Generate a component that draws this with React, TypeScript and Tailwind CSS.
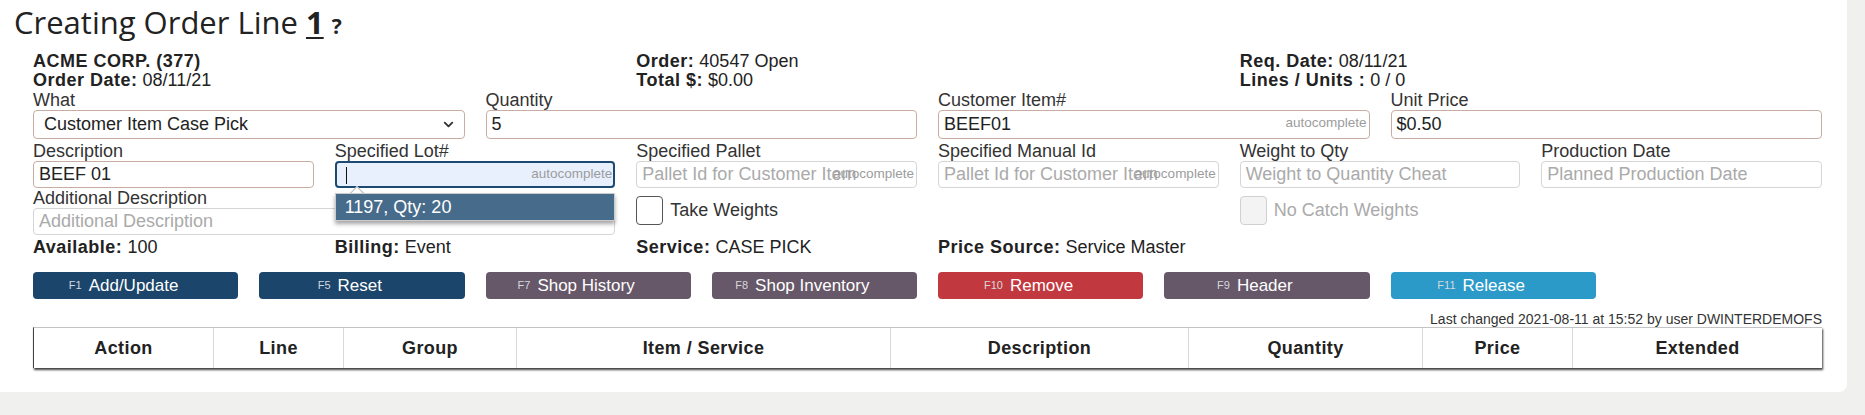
import { ChevronDown } from 'lucide-react';

type Tone = 'warm' | 'plain';

interface BoxProps {
  value?: string;
  placeholder?: string;
  hint?: boolean;
  tone?: Tone;
  tall?: boolean;
}

const Label = ({ children }: { children: React.ReactNode }) => (
  <div className="text-[18px] leading-[20px] text-[#333] whitespace-nowrap">{children}</div>
);

// bold captions in the reference are a touch wider than Arial bold
const B = ({ children }: { children: React.ReactNode }) => (
  <b className="font-bold tracking-[0.5px]">{children}</b>
);

const TextBox = ({ value, placeholder, hint, tone = 'plain', tall }: BoxProps) => (
  <div
    className={`relative ${tall ? 'h-[29px]' : 'h-[27px]'} rounded-[4px] border bg-white overflow-hidden ${
      tone === 'warm' ? 'border-[#c9ada2]' : 'border-[#d5d5d5]'
    }`}
  >
    <div className="absolute inset-y-0 left-[5px] flex items-center text-[18px] whitespace-nowrap">
      {value ? <span className="text-[#222]">{value}</span> : <span className="text-[#aaa]">{placeholder}</span>}
    </div>
    {hint && (
      <span className="absolute right-[2px] top-[4px] text-[13.5px] leading-[16px] text-[#9c9c9c]">autocomplete</span>
    )}
  </div>
);

const Check = ({ label, disabled }: { label: string; disabled?: boolean }) => (
  <div className="flex items-center gap-[7px]">
    <div
      className={`w-[27px] h-[29px] rounded-[4px] border ${
        disabled ? 'bg-[#f3f3f3] border-[#d0d0d0]' : 'bg-white border-[#555]'
      }`}
    />
    <span className={`text-[18px] ${disabled ? 'text-[#aaa]' : 'text-[#333]'}`}>{label}</span>
  </div>
);

const buttons = [
  { fk: 'F1', label: 'Add/Update', color: 'bg-[#1b456a]' },
  { fk: 'F5', label: 'Reset', color: 'bg-[#1b456a]' },
  { fk: 'F7', label: 'Shop History', color: 'bg-[#665769]' },
  { fk: 'F8', label: 'Shop Inventory', color: 'bg-[#665769]' },
  { fk: 'F10', label: 'Remove', color: 'bg-[#c1393f]' },
  { fk: 'F9', label: 'Header', color: 'bg-[#665769]' },
  { fk: 'F11', label: 'Release', color: 'bg-[#2b9ac8]' },
];

const columns = ['Action', 'Line', 'Group', 'Item / Service', 'Description', 'Quantity', 'Price', 'Extended'];

export default function App() {
  return (
    <div className="min-h-[415px] bg-[#f0f0ef] font-['Liberation_Sans',Arial,sans-serif]">
      <div className="w-[1847px] bg-white rounded-br-[8px] pb-[24px]">
        {/* title */}
        <h1 className="pl-[14px] pt-[2px] font-['Open_Sans',sans-serif] text-[31px] leading-[41px] font-normal text-[#222]">
          Creating Order Line <span className="font-bold underline decoration-2 underline-offset-[3px]">1</span>{' '}
          <span className="text-[21px] font-bold">?</span>
        </h1>

        <div className="ml-[33px] w-[1789px]">
          {/* order info */}
          <div className="mt-[5px] grid grid-cols-3 gap-x-[21px] text-[18px] leading-[19px] text-[#222]">
            <div>
              <div>
                <B>ACME CORP. (377)</B>
              </div>
              <div>
                <B>Order Date:</B> 08/11/21
              </div>
            </div>
            <div>
              <div>
                <B>Order:</B> 40547 Open
              </div>
              <div>
                <B>Total $:</B> $0.00
              </div>
            </div>
            <div>
              <div>
                <B>Req. Date:</B> 08/11/21
              </div>
              <div>
                <B>Lines / Units :</B> 0 / 0
              </div>
            </div>
          </div>

          {/* first row */}
          <div className="grid grid-cols-4 gap-x-[21px]">
            <div>
              <Label>What</Label>
              <div className="relative h-[29px] rounded-[4px] border border-[#c9ada2] bg-white flex items-center pl-[10px] pr-[8px]">
                <span className="flex-1 text-[18px] text-[#222]">Customer Item Case Pick</span>
                <ChevronDown size={15} strokeWidth={3} className="text-[#333]" />
              </div>
            </div>
            <div>
              <Label>Quantity</Label>
              <TextBox value="5" tone="warm" tall />
            </div>
            <div>
              <Label>Customer Item#</Label>
              <TextBox value="BEEF01" tone="warm" hint tall />
            </div>
            <div>
              <Label>Unit Price</Label>
              <TextBox value="$0.50" tone="warm" tall />
            </div>
          </div>

          {/* second block */}
          <div className="mt-[2px] grid grid-cols-6 gap-x-[21px]">
            <div>
              <Label>Description</Label>
              <TextBox value="BEEF 01" tone="warm" />
            </div>
            <div className="relative">
              <Label>Specified Lot#</Label>
              <div className="relative h-[27px] rounded-[4px] border-2 border-[#1d4a72] bg-[#e8f0fe]">
                <div className="absolute left-[9px] top-[4px] w-px h-[17px] bg-[#111]" />
                <span className="absolute right-[1px] top-[3px] text-[13.5px] leading-[16px] text-[#9c9c9c]">
                  autocomplete
                </span>
              </div>
              {/* autocomplete menu */}
              <div className="absolute left-0 right-0 top-[52px] z-10">
                <div className="absolute left-[17px] -top-[5px] w-[10px] h-[10px] rotate-45 bg-white border-l border-t border-[#bbb]" />
                <div className="relative h-[28px] bg-[#466b8b] border border-[#ccc] shadow-[0_3px_4px_rgba(0,0,0,0.35)] flex items-center pl-[9px] text-[18px] text-white">
                  1197, Qty: 20
                </div>
              </div>
            </div>
            <div>
              <Label>Specified Pallet</Label>
              <TextBox placeholder="Pallet Id for Customer Item" hint />
            </div>
            <div>
              <Label>Specified Manual Id</Label>
              <TextBox placeholder="Pallet Id for Customer Item" hint />
            </div>
            <div>
              <Label>Weight to Qty</Label>
              <TextBox placeholder="Weight to Quantity Cheat" />
            </div>
            <div>
              <Label>Production Date</Label>
              <TextBox placeholder="Planned Production Date" />
            </div>

            <div className="col-span-2">
              <Label>Additional Description</Label>
              <TextBox placeholder="Additional Description" />
            </div>
            <div className="pt-[8px]">
              <Check label="Take Weights" />
            </div>
            <div />
            <div className="pt-[8px]">
              <Check label="No Catch Weights" disabled />
            </div>
            <div />

            <div className="mt-[2px] text-[18px] leading-[20px] text-[#222] whitespace-nowrap">
              <B>Available:</B> 100
            </div>
            <div className="mt-[2px] text-[18px] leading-[20px] text-[#222] whitespace-nowrap">
              <B>Billing:</B> Event
            </div>
            <div className="mt-[2px] text-[18px] leading-[20px] text-[#222] whitespace-nowrap">
              <B>Service:</B> CASE PICK
            </div>
            <div className="mt-[2px] text-[18px] leading-[20px] text-[#222] whitespace-nowrap">
              <B>Price Source:</B> Service Master
            </div>
          </div>

          {/* action buttons */}
          <div className="mt-[15px] grid grid-cols-8 gap-x-[21px]">
            {buttons.map((b) => (
              <button
                key={b.fk}
                className={`${b.color} h-[27px] rounded-[4px] flex items-center justify-center pr-[24px] text-white`}
              >
                <span className="text-[11px] text-[#d4d8de] mr-[7px]">{b.fk}</span>
                <span className="text-[17px]">{b.label}</span>
              </button>
            ))}
          </div>

          <div className="mt-[12px] text-right text-[14px] leading-[16px] text-[#333]">
            Last changed 2021-08-11 at 15:52 by user DWINTERDEMOFS
          </div>

          {/* order lines table header */}
          <div className="grid grid-cols-[180px_130px_173px_374px_298px_234px_150px_1fr] h-[41px] bg-white border-t border-t-[#c4c4c4] border-l border-l-[#444] shadow-[1px_2px_2px_rgba(0,0,0,0.75)]">
            {columns.map((c, i) => (
              <div
                key={c}
                className={`flex items-center justify-center text-[18px] font-bold tracking-[0.4px] text-[#222] ${
                  i < columns.length - 1 ? 'border-r border-[#d9d9d9]' : ''
                }`}
              >
                {c}
              </div>
            ))}
          </div>
        </div>
      </div>
    </div>
  );
}
